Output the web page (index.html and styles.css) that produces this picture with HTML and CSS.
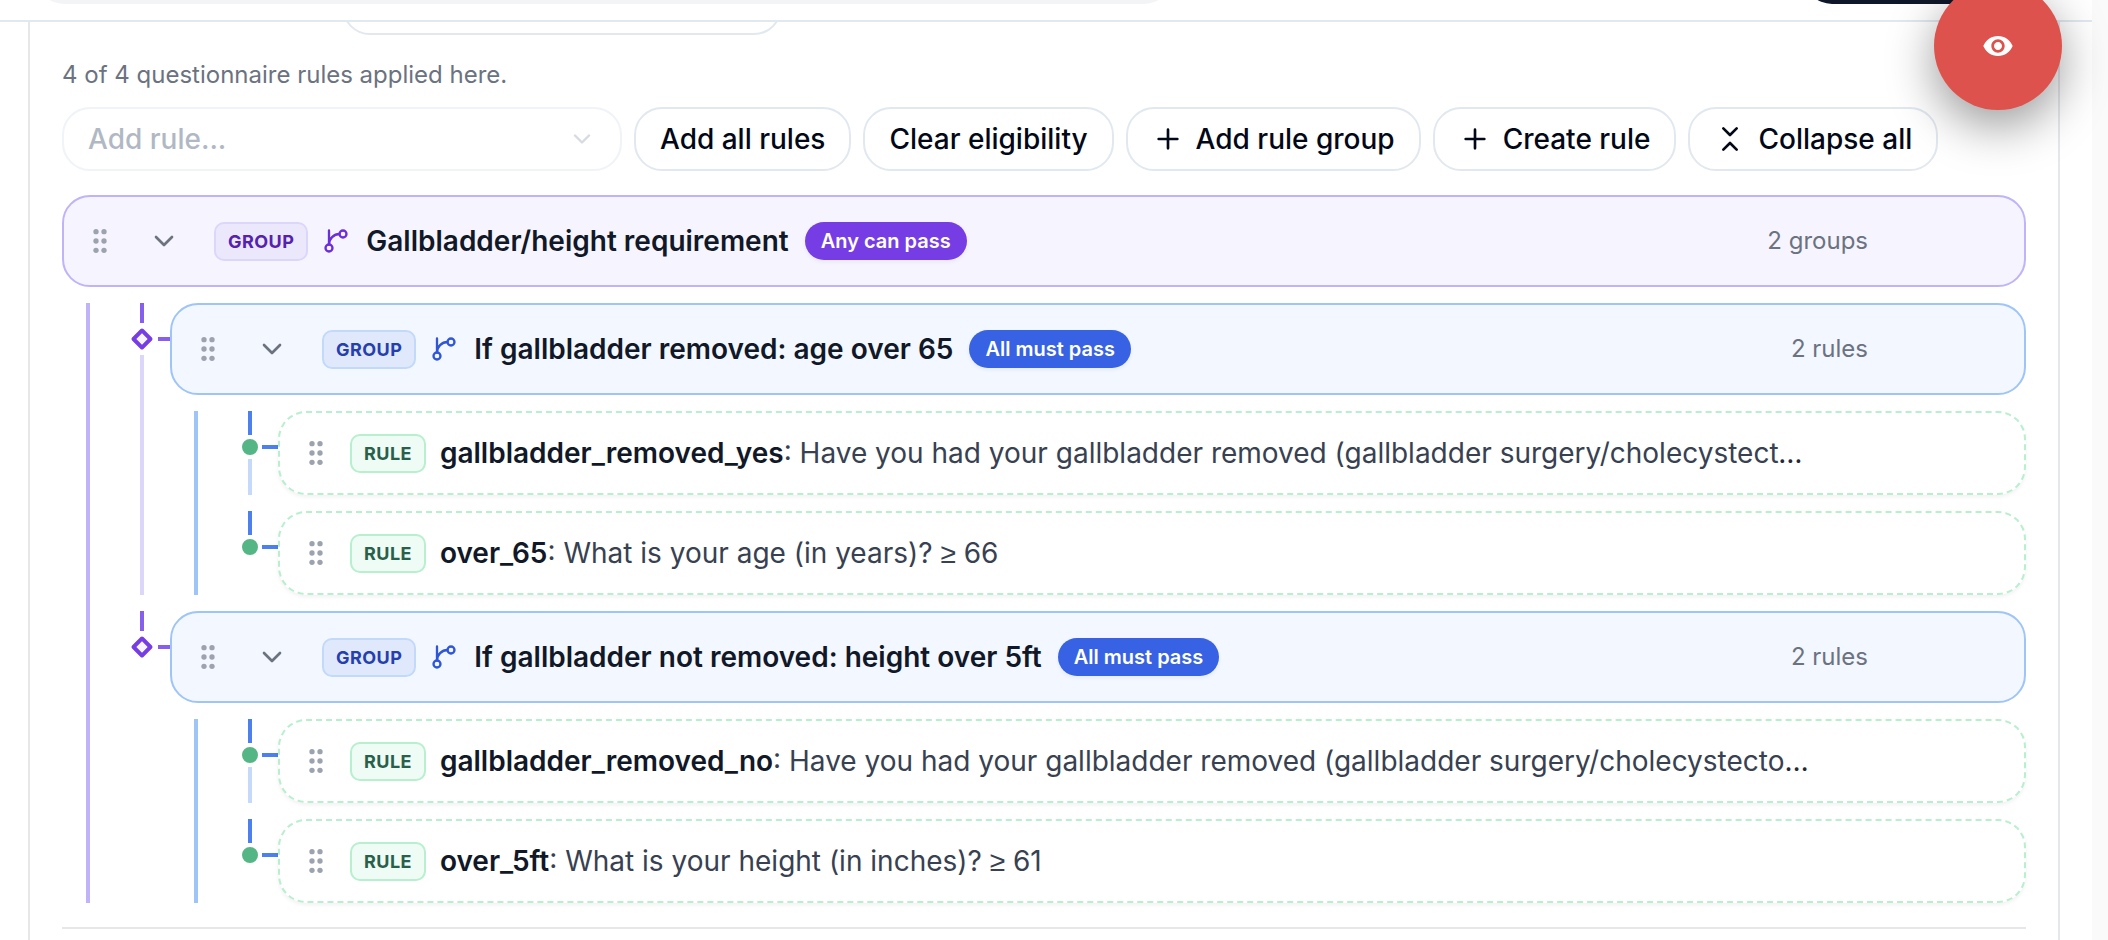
FILE: index.html
```html
<!DOCTYPE html>
<html lang="en">
<head>
    <meta charset="UTF-8">
    <meta name="viewport" content="width=device-width, initial-scale=1.0">
    <title>Eligibility Rules</title>
    <link rel="stylesheet" href="styles.css">
</head>
<body>
<!-- Shared icons -->
<svg class="sprite" aria-hidden="true">
    <symbol id="grip" viewBox="0 0 24 24">
        <g fill="currentColor">
            <circle cx="9" cy="5" r="2"/><circle cx="15" cy="5" r="2"/>
            <circle cx="9" cy="12" r="2"/><circle cx="15" cy="12" r="2"/>
            <circle cx="9" cy="19" r="2"/><circle cx="15" cy="19" r="2"/>
        </g>
    </symbol>
    <symbol id="chevron" viewBox="0 0 24 24"><path d="m6 9 6 6 6-6"/></symbol>
    <symbol id="plus" viewBox="0 0 24 24"><path d="M5 12h14M12 5v14"/></symbol>
    <symbol id="collapse" viewBox="0 0 24 24"><path d="m7 20 5-5 5 5M7 4l5 5 5-5"/></symbol>
    <symbol id="branch" viewBox="0 0 24 24">
        <path d="M15 6a9 9 0 0 0-9 9V3"/><circle cx="18" cy="6" r="3"/><circle cx="6" cy="18" r="3"/>
    </symbol>
</svg>

<div class="page">
    <header class="topbar">
        <input class="search" type="text" aria-label="Search">
        <button class="save" aria-label="Save"></button>
    </header>

    <main class="card">
        <input class="field" type="text" aria-label="Name">
        <p class="summary">4 of 4 questionnaire rules applied here.</p>

        <div class="toolbar">
            <div class="select">
                <select aria-label="Add rule" disabled>
                    <option>Add rule...</option>
                </select>
                <svg class="icon"><use href="#chevron"/></svg>
            </div>
            <button class="btn">Add all rules</button>
            <button class="btn">Clear eligibility</button>
            <button class="btn"><svg class="icon"><use href="#plus"/></svg>Add rule group</button>
            <button class="btn"><svg class="icon"><use href="#plus"/></svg>Create rule</button>
            <button class="btn"><svg class="icon"><use href="#collapse"/></svg>Collapse all</button>
        </div>

        <div class="tree any">
            <div class="row group">
                <svg class="icon grip"><use href="#grip"/></svg>
                <button class="toggle" aria-label="Toggle group"><svg class="icon"><use href="#chevron"/></svg></button>
                <span class="tag">GROUP</span>
                <svg class="icon branch"><use href="#branch"/></svg>
                <span class="title">Gallbladder/height requirement</span>
                <span class="pill">Any can pass</span>
                <span class="count">2 groups</span>
            </div>

            <div class="children">
                <div class="item">
                    <div class="rail"><i class="stem"></i><i class="node"></i><i class="arm"></i><i class="tail"></i></div>
                    <div class="tree all">
                        <div class="row group">
                            <svg class="icon grip"><use href="#grip"/></svg>
                            <button class="toggle" aria-label="Toggle group"><svg class="icon"><use href="#chevron"/></svg></button>
                            <span class="tag">GROUP</span>
                            <svg class="icon branch"><use href="#branch"/></svg>
                            <span class="title">If gallbladder removed: age over 65</span>
                            <span class="pill">All must pass</span>
                            <span class="count">2 rules</span>
                        </div>
                        <div class="children">
                            <div class="item">
                                <div class="rail"><i class="stem"></i><i class="node"></i><i class="arm"></i><i class="tail"></i></div>
                                <div class="row rule">
                                    <svg class="icon grip"><use href="#grip"/></svg>
                                    <span class="tag">RULE</span>
                                    <p class="text"><b>gallbladder_removed_yes</b><span>: Have you had your gallbladder removed (gallbladder surgery/cholecystectomy)?</span></p>
                                </div>
                            </div>
                            <div class="item">
                                <div class="rail"><i class="stem"></i><i class="node"></i><i class="arm"></i></div>
                                <div class="row rule">
                                    <svg class="icon grip"><use href="#grip"/></svg>
                                    <span class="tag">RULE</span>
                                    <p class="text"><b>over_65</b><span>: What is your age (in years)? <span class="op">≥</span> 66</span></p>
                                </div>
                            </div>
                        </div>
                    </div>
                </div>

                <div class="item">
                    <div class="rail"><i class="stem"></i><i class="node"></i><i class="arm"></i></div>
                    <div class="tree all">
                        <div class="row group">
                            <svg class="icon grip"><use href="#grip"/></svg>
                            <button class="toggle" aria-label="Toggle group"><svg class="icon"><use href="#chevron"/></svg></button>
                            <span class="tag">GROUP</span>
                            <svg class="icon branch"><use href="#branch"/></svg>
                            <span class="title">If gallbladder not removed: height over 5ft</span>
                            <span class="pill">All must pass</span>
                            <span class="count">2 rules</span>
                        </div>
                        <div class="children">
                            <div class="item">
                                <div class="rail"><i class="stem"></i><i class="node"></i><i class="arm"></i><i class="tail"></i></div>
                                <div class="row rule">
                                    <svg class="icon grip"><use href="#grip"/></svg>
                                    <span class="tag">RULE</span>
                                    <p class="text"><b>gallbladder_removed_no</b><span>: Have you had your gallbladder removed (gallbladder surgery/cholecystectomy)?</span></p>
                                </div>
                            </div>
                            <div class="item">
                                <div class="rail"><i class="stem"></i><i class="node"></i><i class="arm"></i></div>
                                <div class="row rule">
                                    <svg class="icon grip"><use href="#grip"/></svg>
                                    <span class="tag">RULE</span>
                                    <p class="text"><b>over_5ft</b><span>: What is your height (in inches)? <span class="op">≥</span> 61</span></p>
                                </div>
                            </div>
                        </div>
                    </div>
                </div>
            </div>
        </div>
        <hr>
    </main>
</div>

<button class="fab" aria-label="Preview">
    <svg viewBox="0 0 24 24" fill="#fff">
        <path d="M12 4.5C7 4.5 2.73 7.61 1 12c1.73 4.39 6 7.5 11 7.5s9.27-3.11 11-7.5c-1.73-4.39-6-7.5-11-7.5zM12 17c-2.76 0-5-2.24-5-5s2.24-5 5-5 5 2.24 5 5-2.24 5-5 5zm0-8c-1.66 0-3 1.34-3 3s1.34 3 3 3 3-1.34 3-3-1.34-3-3-3z"/>
    </svg>
</button>
</body>
</html>
```
FILE: styles.css
```css
* {
    box-sizing: border-box;
}
body {
    margin: 0;
    height: 100vh;
    overflow: hidden;
    background: #fafafa;
    color: #020817;
    font-family: Inter, "Liberation Sans", sans-serif;
    font-size: 28px;
    line-height: 40px;
}
button, input, select {
    font: inherit;
    color: inherit;
}
p {
    margin: 0;
}
.sprite {
    display: none;
}
.icon {
    display: block;
    flex: none;
    width: 32px;
    height: 32px;
    fill: none;
    stroke: currentColor;
    stroke-width: 2;
    stroke-linecap: round;
    stroke-linejoin: round;
}
.page {
    display: flex;
    flex-direction: column;
    height: 100vh;
    margin-right: 16px;
    background: #fff;
}

/* Sticky bar, mostly scrolled off the top */
.topbar {
    position: relative;
    z-index: 1;
    flex: none;
    display: flex;
    justify-content: space-between;
    align-items: flex-end;
    height: 22px;
    padding: 0 36px 16px;
    background: #fff;
    border-bottom: 2px solid #e2e8f0;
}
.search {
    width: 1136px;
    max-width: 60%;
    height: 64px;
    border: 0;
    border-radius: 28px;
    background: #f3f4f6;
}
.save {
    width: 252px;
    height: 64px;
    border: 0;
    border-radius: 28px;
    background: #0f172a;
}

.card {
    flex: 1;
    margin: 0 32px 0 28px;
    padding: 0 32px;
    border: 2px solid #e5e7eb;
    border-width: 0 2px;
}
.field {
    display: block;
    width: 440px;
    height: 64px;
    margin: -51px 0 24px 280px;
    border: 2px solid #e2e8f0;
    border-radius: 28px;
    background: #fff;
}
.summary {
    font-size: 24px;
    line-height: 32px;
    margin-bottom: 16px;
    color: #6b7280;
}

.toolbar {
    display: flex;
    flex-wrap: wrap;
    gap: 12px;
    margin-bottom: 24px;
}
.btn {
    display: flex;
    align-items: center;
    gap: 12px;
    height: 64px;
    padding: 0 24px;
    border: 2px solid #e2e8f0;
    border-radius: 28px;
    background: #fff;
    font-weight: 500;
    white-space: nowrap;
}
.select {
    position: relative;
    width: 560px;
    opacity: 0.5;
}
.select select {
    appearance: none;
    display: block;
    width: 100%;
    height: 64px;
    padding: 0 24px;
    border: 2px solid #e2e8f0;
    border-radius: 28px;
    background: #fff;
    color: #64748b;
    font-weight: 500;
    opacity: 1;
}
.select .icon {
    position: absolute;
    right: 26px;
    top: 18px;
    width: 28px;
    height: 28px;
    color: #64748b;
    opacity: 0.5;
}

/* Rule tree */
.tree.any {
    --line: #c0b3f9;
    --fill: #f6f5ff;
    --tag-fill: #ece8fc;
    --tag-line: #ddd6fb;
    --tag-text: #5522b0;
    --icon: #6b2fd9;
    --pill: #753de3;
    --stem: #875fee;
    --tail: #ddd6fb;
}
.tree.all {
    --line: #9fc5f8;
    --fill: #f3f7ff;
    --tag-fill: #dfe9fb;
    --tag-line: #c3d9fa;
    --tag-text: #263fae;
    --icon: #3056d8;
    --pill: #3662e3;
    --stem: #4b80ee;
    --tail: #c5dafa;
    flex: 1;
    min-width: 0;
}
.row {
    display: flex;
    align-items: center;
    padding: 0 20px;
    border-radius: 28px;
}
.group {
    height: 92px;
    border: 2px solid var(--line);
    background: var(--fill);
}
.rule {
    flex: 1;
    min-width: 0;
    height: 84px;
    padding-right: 212px;
    border: 2px dashed #b7efcf;
    background: #fff;
    box-shadow: 0 2px 4px rgba(0, 0, 0, 0.06);
}
.grip {
    color: #9ca3af;
    stroke: none;
    margin-right: 18px;
}
.toggle {
    display: flex;
    align-items: center;
    justify-content: center;
    width: 60px;
    height: 60px;
    margin-right: 20px;
    padding: 0;
    border: 0;
    background: none;
    color: #6b7280;
}
.tag {
    flex: none;
    padding: 6px 12px 5px;
    border: 2px solid var(--tag-line);
    border-radius: 10px;
    background: var(--tag-fill);
    color: var(--tag-text);
    font-size: 18px;
    font-weight: 700;
    line-height: 24px;
    letter-spacing: 0.025em;
}
.rule .tag {
    border-color: #b7efcf;
    background: #effcf5;
    color: #28604a;
}
.branch {
    width: 28px;
    height: 28px;
    margin: 0 16px 0 14px;
    color: var(--icon);
}
.title {
    color: #111827;
    font-weight: 600;
    white-space: nowrap;
}
.pill {
    margin-left: 16px;
    padding: 5px 16px;
    border-radius: 19px;
    background: var(--pill);
    box-shadow: 0 2px 4px rgba(0, 0, 0, 0.06);
    color: #fff;
    font-size: 20px;
    font-weight: 600;
    line-height: 28px;
    white-space: nowrap;
}
.count {
    margin-left: auto;
    padding-right: 136px;
    color: #6b7280;
    font-size: 24px;
    line-height: 32px;
}
.text {
    min-width: 0;
    margin-left: 14px;
    overflow: hidden;
    text-overflow: ellipsis;
    white-space: nowrap;
    color: #1f2937;
}
.text b {
    color: #111827;
    font-weight: 600;
}
.text span {
    color: #374151;
}
.text .op {
    font-family: "Liberation Sans", sans-serif;
}

.children {
    display: flex;
    flex-direction: column;
    gap: 16px;
    margin: 16px 0 0 24px;
    border-left: 4px solid var(--line);
}
.item {
    display: flex;
}

/* Connector between a parent line and its child row */
.rail {
    flex: none;
    display: grid;
    grid-template-columns: 40px 24px 16px;
    grid-template-rows: 24px 24px 1fr;
    justify-items: center;
    align-items: center;
}
.any > .children > .item > .rail {
    grid-template-columns: 36px 32px 12px;
    grid-template-rows: 20px 32px 1fr;
}
.stem, .tail {
    grid-column: 2;
    width: 4px;
    height: 100%;
    background: var(--stem);
}
.tail {
    background: var(--tail);
}
.arm {
    width: 100%;
    height: 4px;
    background: var(--stem);
}
.node {
    grid-column: 2;
    width: 16px;
    height: 16px;
    border-radius: 50%;
    background: #55b685;
}
.any > .children > .item > .rail > .node {
    border: 4px solid #753de3;
    border-radius: 2px;
    background: #f6f5ff;
    box-shadow: 0 0 0 4px #fff;
    transform: rotate(45deg);
}

hr {
    margin: 24px 0 0;
    border: 0;
    border-top: 2px solid #e5e7eb;
}

.fab {
    position: fixed;
    top: -18px;
    right: 46px;
    display: flex;
    align-items: center;
    justify-content: center;
    width: 128px;
    height: 128px;
    z-index: 2;
    border: 0;
    border-radius: 50%;
    background: #dd524c;
    box-shadow: 0 16px 48px rgba(0, 0, 0, 0.4);
}
.fab svg {
    width: 32px;
    height: 32px;
}
```
